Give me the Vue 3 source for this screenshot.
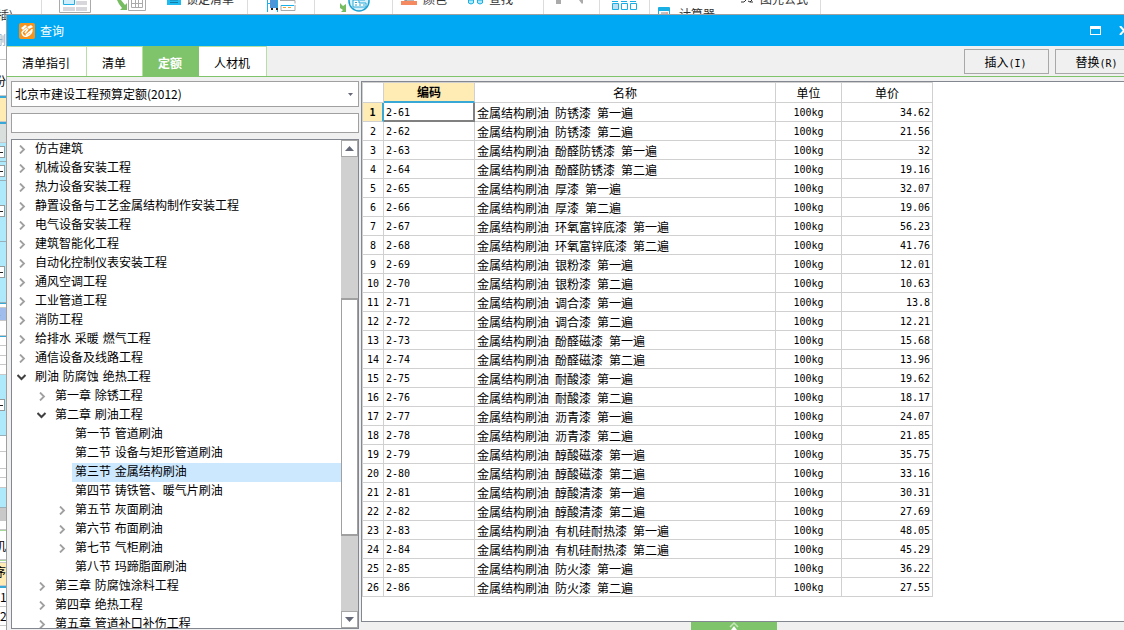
<script setup>
import { ref } from 'vue'

const tabs = ['清单指引', '清单', '定额', '人材机']
const activeTab = ref('定额')
const library = ref('北京市建设工程预算定额(2012)')
const keyword = ref('')
const selectedNode = ref('第三节 金属结构刷油')
const selectedRow = ref(0)

const node = (level, state, text) => ({ level, state, text })
const nodes = [
  node(0, 'closed', '仿古建筑'),
  node(0, 'closed', '机械设备安装工程'),
  node(0, 'closed', '热力设备安装工程'),
  node(0, 'closed', '静置设备与工艺金属结构制作安装工程'),
  node(0, 'closed', '电气设备安装工程'),
  node(0, 'closed', '建筑智能化工程'),
  node(0, 'closed', '自动化控制仪表安装工程'),
  node(0, 'closed', '通风空调工程'),
  node(0, 'closed', '工业管道工程'),
  node(0, 'closed', '消防工程'),
  node(0, 'closed', '给排水 采暖 燃气工程'),
  node(0, 'closed', '通信设备及线路工程'),
  node(0, 'open', '刷油 防腐蚀 绝热工程'),
  node(1, 'closed', '第一章 除锈工程'),
  node(1, 'open', '第二章 刷油工程'),
  node(2, 'leaf', '第一节 管道刷油'),
  node(2, 'leaf', '第二节 设备与矩形管道刷油'),
  node(2, 'leaf', '第三节 金属结构刷油'),
  node(2, 'leaf', '第四节 铸铁管、暖气片刷油'),
  node(2, 'closed', '第五节 灰面刷油'),
  node(2, 'closed', '第六节 布面刷油'),
  node(2, 'closed', '第七节 气柜刷油'),
  node(2, 'leaf', '第八节 玛蹄脂面刷油'),
  node(1, 'closed', '第三章 防腐蚀涂料工程'),
  node(1, 'closed', '第四章 绝热工程'),
  node(1, 'closed', '第五章 管道补口补伤工程'),
]

const coatings = ['防锈漆', '酚醛防锈漆', '厚漆', '环氧富锌底漆', '银粉漆', '调合漆', '酚醛磁漆', '耐酸漆', '沥青漆', '醇酸磁漆', '醇酸清漆', '有机硅耐热漆', '防火漆']
const prices = ['34.62', '21.56', '32', '19.16', '32.07', '19.06', '56.23', '41.76', '12.01', '10.63', '13.8', '12.21', '15.68', '13.96', '19.62', '18.17', '24.07', '21.85', '35.75', '33.16', '30.31', '27.69', '48.05', '45.29', '36.22', '27.55']
const rows = prices.map((price, i) => ({
  code: `2-${61 + i}`,
  words: ['金属结构刷油', coatings[Math.floor(i / 2)], i % 2 ? '第二遍' : '第一遍'],
  unit: '100kg',
  price,
}))

/* Slices of the project sheet left of the dialog: kind, height, text */
const strip = [
  ['tool', 46, '删'], ['cell tall', 36, '份'], ['blue', 2], ['yellow', 24], ['blue', 2], ['sage', 19],
  ['cyan', 19, '', true], ['cyan', 19, '', true], ['cyan', 61, '', true], ['cyan', 61, '', true],
  ['blue', 1], ['cell', 4], ['picked', 13, '–'], ['cell', 15], ['blue', 1], ['cell', 9], ['cell', 10], ['cell', 9], ['cell', 10],
  ['cyan', 61, '', true], ['cell', 16], ['cell', 17], ['cell', 9], ['cell', 10], ['cyan', 20], ['grey', 13], ['cell', 9],
  ['green', 1], ['cell mid', 29, '机'], ['green', 1], ['cell', 2], ['yellow', 23, '序'], ['blue', 2], ['cell num', 19, '1'], ['cell num', 19, '2'], ['cell', 5],
]
</script>

<template>
  <div class="page">
    <div class="ribbon">
      <div class="group g1"><span class="cut">插)</span></div>
      <div class="group g2">
        <svg class="i-form" width="32" height="14" viewBox="0 0 32 14">
          <path d="M.5 0v12.500h31V0" fill="#fff" stroke="#aaa" /><path d="M4.500 0v4.500h11V0" fill="#cdeefa" stroke="#1ab0e8" />
          <path d="M17 1h11v4H17zM4 7h12v4H4zM17 7h11v4H17z" fill="#d8d8dc" />
        </svg>
        <svg class="i-copy" width="29" height="14" viewBox="0 0 29 14">
          <path d="M0 0h4l4 5 2-2v7H3l2-2-3-4z" fill="#76bd62" /><path d="M11.500 0v10.500h17V0M14.500 0v7.500h11V0M14 3.500h11M18.500 0v7M21.500 0v7" fill="none" stroke="#aaa" />
        </svg>
        <svg class="i-lock" width="14" height="14" viewBox="0 0 14 14"><path d="M0 0h14v5H0z" fill="#1fbaf0" /><path d="M3 0h8M3 2.500h8" stroke="#147aa8" /></svg>
        <span class="label">锁定清单</span>
      </div>
      <div class="group g3">
        <svg width="30" height="14" viewBox="0 0 30 14">
          <path d="M1.500 0v12M1 3.500h10M11.500 0v12" stroke="#1ab0e8" fill="none" /><path d="M4 0h7v8H4z" fill="#4d94d8" /><path d="M5 8h2v2H5zM10 8h2v2h-2z" fill="#222" />
          <path d="M14 .500h15v3M15 5.500v5h14V5" stroke="#aaa" fill="none" /><path d="M15 5.500h13" stroke="#1ab0e8" /><path d="M17 7.500h3M22 7.500h3" stroke="#f1a33a" />
        </svg>
      </div>
      <div class="group g4">
        <svg width="31" height="14" viewBox="0 0 31 14">
          <path d="M0 3l3 3 3-2v8H1l2-2-3-2z" fill="#76bd62" /><circle cx="19" cy="1" r="10" fill="#d6f1fb" stroke="#1a9fcf" stroke-width="1.500" />
          <path d="M13 0h6v3h7v4H13z" fill="#fff" stroke="#25a8d8" /><path d="M15 2.500h2M15 5h2M19 5h2M23 5h2M20 0h5" stroke="#25a8d8" />
        </svg>
      </div>
      <div class="group g5">
        <svg width="17" height="14" viewBox="0 0 17 14"><path d="M3 0h10M5 0v2" stroke="#777" /><path d="M0 1h16v4H0z" fill="#f58a60" /></svg>
        <span class="label">颜色</span>
        <svg class="i-find" width="16" height="14" viewBox="0 0 16 14"><path d="M.500 0h5v3q-2.500 2-5 0zM9.500 0h5v3q-2.500 2-5 0z" fill="#aeeafa" stroke="#18afe4" /></svg>
        <span class="label">查找</span>
      </div>
      <div class="group g6"><svg width="30" height="14" viewBox="0 0 30 14"><path d="M0 0h5v4H0zM23 0h4v3l-1 1z" fill="#aaa" /></svg></div>
      <div class="group g7">
        <svg width="27" height="14" viewBox="0 0 27 14">
          <path d="M1 1.500h6M10 1.500h6M19 1.500h6" stroke="#18afe4" /><path d="M1.500 3.500h6v6h-6z" fill="#bfe0f2" stroke="#18afe4" /><path d="M10.500 3.500h6v6h-6zM19.500 3.500h6v6h-6z" fill="#fff" stroke="#18afe4" />
        </svg>
      </div>
      <div class="group g8">
        <svg width="13" height="14" viewBox="0 0 13 14"><path d="M.500 14V7.500h11V14" fill="#fff" stroke="#18afe4" /><path d="M1 8h10v3H1z" fill="#18afe4" /><path d="M3 13h5" stroke="#888" /><path d="M8 13h2" stroke="#e8502a" /></svg>
        <span class="low">计算器</span>
        <svg class="i-fx" width="14" height="14" viewBox="0 0 14 14"><path d="M0 2h3l2-2M7 1l2 1M11 0l-2 2h3" stroke="#333" fill="none" /></svg>
        <span class="label">图元公式</span>
      </div>
    </div>

    <div class="strip">
      <div v-for="([kind, height, text, box], i) in strip" :key="i" class="slice" :class="kind" :style="{ height: height + 'px' }">
        <span v-if="text">{{ text }}</span><i v-if="box" class="minus"></i>
      </div>
    </div>

    <section class="dialog" aria-label="查询">
      <header class="title">
        <svg width="16" height="16" viewBox="0 0 16 16">
          <rect width="16" height="16" rx="2" fill="#f7941d" />
          <path d="M2 5l4-3 2 1-4 4zM8 4l4-2 2 2-4 2z" fill="#fff" />
          <path d="M3 9l5-4M3 9c0 3 2 5 5 4 3-1 5-4 5-7M13 7l-6 5M9 6l-3 4" fill="none" stroke="#fff" stroke-width="1.600" />
        </svg>
        <h1>查询</h1>
        <button class="win" aria-label="最大化"><svg width="11" height="9" viewBox="0 0 11 9"><path d="M0 0h11v9H0zM1 3v5h9V3z" fill="#fff" fill-rule="evenodd" /></svg></button>
        <button class="win" aria-label="关闭"><svg width="11" height="9" viewBox="0 0 11 9"><path d="M1 0l8 9M9 0L1 9" stroke="#fff" stroke-width="2" /></svg></button>
      </header>

      <nav class="bar">
        <button v-for="t in tabs" :key="t" class="tab" :class="{ active: t === activeTab }" @click="activeTab = t">{{ t }}</button>
        <div class="actions">
          <button>插入<span>(I)</span></button>
          <button>替换<span>(R)</span></button>
        </div>
      </nav>

      <div class="body">
        <aside class="side">
          <div class="combo">
            <select v-model="library" aria-label="定额库"><option>北京市建设工程预算定额(2012)</option></select>
            <svg width="7" height="4" viewBox="0 0 7 4"><path d="M1 0h5L3.500 3z" fill="#666a78" /></svg>
          </div>
          <input v-model="keyword" class="search" type="text" aria-label="搜索" />
          <div class="tree">
            <ul>
              <li v-for="n in nodes" :key="n.text" :class="['level' + n.level, { selected: n.text === selectedNode }]" @click="selectedNode = n.text">
                <span class="toggle">
                  <svg v-if="n.state === 'closed'" width="7" height="9" viewBox="0 0 7 9"><path d="M1 .500l4 4-4 4" fill="none" stroke="#a0a0a0" stroke-width="1.800" /></svg>
                  <svg v-if="n.state === 'open'" width="10" height="7" viewBox="0 0 10 7"><path d="M.500 1l4 4 4-4" fill="none" stroke="#404040" stroke-width="2" /></svg>
                </span>
                <span class="text">{{ n.text }}</span>
              </li>
            </ul>
            <div class="scroll">
              <button aria-label="向上"><svg width="9" height="5" viewBox="0 0 9 5"><path d="M4.500 0L9 5H0z" fill="#666a78" /></svg></button>
              <div class="track"><div class="thumb"></div></div>
              <button aria-label="向下"><svg width="9" height="5" viewBox="0 0 9 5"><path d="M4.500 5L9 0H0z" fill="#666a78" /></svg></button>
            </div>
          </div>
        </aside>

        <main class="main">
          <div class="grid">
            <table>
              <colgroup><col class="c-no" /><col class="c-code" /><col class="c-name" /><col class="c-unit" /><col class="c-price" /></colgroup>
              <thead>
                <tr><th></th><th class="current">编码</th><th>名称</th><th>单位</th><th>单价</th></tr>
              </thead>
              <tbody>
                <tr v-for="(r, i) in rows" :key="r.code" :class="{ picked: i === selectedRow }" @click="selectedRow = i">
                  <td class="no">{{ i + 1 }}</td>
                  <td class="code">{{ r.code }}</td>
                  <td class="name"><template v-for="(w, k) in r.words" :key="k"><span>{{ w }}</span>{{ ' ' }}</template></td>
                  <td class="unit">{{ r.unit }}</td>
                  <td class="price">{{ r.price }}</td>
                </tr>
              </tbody>
            </table>
          </div>
          <footer>
            <button aria-label="展开"><svg width="12" height="8" viewBox="0 0 12 8"><path d="M2 5l4-4 4 4" fill="none" stroke="#c4e6b8" stroke-width="1.500" /><path d="M3 8l3-4 3 4z" fill="#fff" /></svg></button>
          </footer>
        </main>
      </div>
    </section>
  </div>
</template>

<style>
html, body { height: 100%; margin: 0; overflow: hidden; }
#app { height: 100%; }
</style>

<style scoped>
* { box-sizing: border-box; }
.page { position: relative; height: 100vh; overflow: hidden; background: #fff; color: #000; font: 12px/18px "Noto Sans CJK SC", sans-serif; }
button { margin: 0; padding: 0; border: 0; background: none; color: inherit; font: inherit; }
svg { display: block; flex: none; }

.ribbon { display: flex; height: 14px; color: #333; }
.group { display: flex; flex: none; border-right: 1px solid #dcdcdc; white-space: nowrap; }
.g1 { width: 42px; }
.g2 { width: 206px; padding-left: 17px; }
.g3 { width: 67px; padding-left: 18px; }
.g4 { width: 78px; padding-left: 25px; }
.g5 { width: 151px; padding-left: 8px; }
.g6 { width: 56px; padding-left: 12px; }
.g7 { width: 50px; padding-left: 11px; }
.g8 { width: 171px; padding-left: 8px; }
.i-copy { margin-left: 26px; }
.i-lock { margin-left: 21px; }
.i-find { margin-left: 21px; }
.i-fx { margin-left: 26px; }
.label { margin: -10px 0 0 5px; }
.low { margin: 5px 0 0 8px; }
.cut { margin: 6px 0 0 -3px; }

.strip { width: 6px; overflow: hidden; }
.slice { position: relative; overflow: hidden; border-bottom: 1px solid #c8c8c8; white-space: nowrap; }
.slice span { display: block; margin-left: -6px; }
.slice.num span { margin-left: 0; }
.tool { padding-top: 17px; color: #8ba3b8; }
.slice.tall { padding-top: 12px; }
.slice.mid { padding-top: 6px; }
.slice.blue { border: 0; background: #38a9d6; }
.slice.green { border: 0; background: #a6d998; }
.yellow { background: #ffebb4; }
.sage { background: #d8dfdc; }
.cyan { display: flex; align-items: center; background: #aee9fb; border-color: #9ab0b8; }
.grey { background: #c8c8c8; }
.slice.picked { background: #a0bcec; line-height: 12px; }
.minus { width: 5px; height: 12px; border: 1px solid #999; border-left: 0; background: linear-gradient(#222, #222) 0 5px / 3px 1px no-repeat #fff; }

.dialog { position: absolute; inset: 14px -20px 0 6px; display: flex; flex-direction: column; border: 1px solid #a0a0a0; border-width: 1px 0 0 1px; background: #f0f0f0; }
.title { display: flex; flex: none; align-items: center; height: 31px; padding: 0 14px 0 12px; background: #00a8f3; color: #fff; }
.title h1 { flex: 1; margin: 0 0 0 5px; font-size: 12px; font-weight: 400; }
.win { margin-left: 18px; }
.bar { display: flex; flex: none; height: 31px; border-bottom: 1px solid #7fc46b; }
.tab { padding: 3px 16px 0 15px; border: 1px solid #b4e0a4; border-width: 1px 1px 0 0; background: #fff; }
.tab.active { border-color: #7fc46b; background: #7fc46b; color: #fff; font-weight: 700; }
.actions { display: flex; gap: 6px; margin: 3px 4px 2px auto; }
.actions button { width: 85px; padding-right: 2px; border: 1px solid #a8a8a8; }
.actions span { font: 10px/12px "DejaVu Sans Mono", monospace; }

.body { display: flex; flex: 1; gap: 2px; min-height: 0; padding: 4px 0 0 4px; }
.side { display: flex; flex: 0 0 348px; flex-direction: column; gap: 6px; padding-bottom: 1px; }
.combo { position: relative; display: flex; height: 26px; }
.combo select { width: 100%; padding: 0 16px 0 3px; appearance: none; border: 1px solid #a0a0a0; border-radius: 0; background: #fff; color: #000; font: inherit; }
.combo svg { position: absolute; right: 5px; top: 12px; pointer-events: none; }
.search { height: 20px; padding: 0 3px; border: 1px solid #a0a0a0; background: #fff; font: inherit; outline: 0; }
.tree { display: flex; flex: 1; min-height: 0; border: 1px solid #828790; background: #fff; }
.tree ul { flex: 1; margin: 0; padding: 0; overflow: hidden; list-style: none; font-family: "DejaVu Sans", "Noto Sans CJK SC", sans-serif; }
.tree li { display: flex; height: 19px; line-height: 18px; white-space: nowrap; }
.level1 { padding-left: 20px; }
.level2 { padding-left: 40px; }
.toggle { display: flex; flex: 0 0 20px; align-items: center; justify-content: center; }
.text { flex: 1; padding-left: 3px; }
.selected .text { background: #cce8ff; }
.scroll { display: flex; flex: 0 0 17px; flex-direction: column; background: #d0d0d0; }
.scroll button { display: flex; flex: 0 0 17px; align-items: center; justify-content: center; border: 1px solid #a8a8a8; background: #fff; }
.track { flex: 1; padding-top: 141px; }
.thumb { height: 238px; border: 1px solid #a0a0a0; border-width: 2px 1px; background: #fff; }

.main { display: flex; flex: 1; flex-direction: column; min-width: 0; }
.grid { flex: 1; overflow: hidden; border: 1px solid #828790; background: #fff; }
table { width: 571px; table-layout: fixed; border-collapse: separate; border-spacing: 0; border: 1px solid #d0d0d0; border-width: 1px 0 0 1px; font: 10px/16px "DejaVu Sans Mono", monospace; }
.c-no { width: 21px; }
.c-code { width: 91px; }
.c-name { width: 301px; }
.c-unit { width: 66px; }
.c-price { width: 91px; }
th, td { height: 19px; padding: 0 2px; border: 1px solid #d0d0d0; border-width: 0 1px 1px 0; text-align: left; white-space: nowrap; }
th { height: 20px; font: 12px/18px "Noto Sans CJK SC", sans-serif; text-align: center; }
th.current { border-bottom: 2px solid #38a9d6; background: #ffebb4; font-weight: 700; }
td { padding: 2px 2px 0; }
td.no, td.unit { padding: 2px 0 0; text-align: center; }
td.price { text-align: right; }
td.name { padding-top: 4px; line-height: 12px; }
.name span { font: 12px/12px "Noto Sans CJK SC", sans-serif; }
.picked .no { border-right: 2px solid #38a9d6; background: #ffebb4; font-weight: 700; }
.picked .code { border: 2px solid #808080; border-width: 0 2px 2px 0; line-height: 15px; }
footer { display: flex; flex: 0 0 8px; justify-content: center; padding-right: 38px; }
footer button { display: flex; justify-content: center; width: 86px; height: 8px; background: #7fc46b; }
</style>
